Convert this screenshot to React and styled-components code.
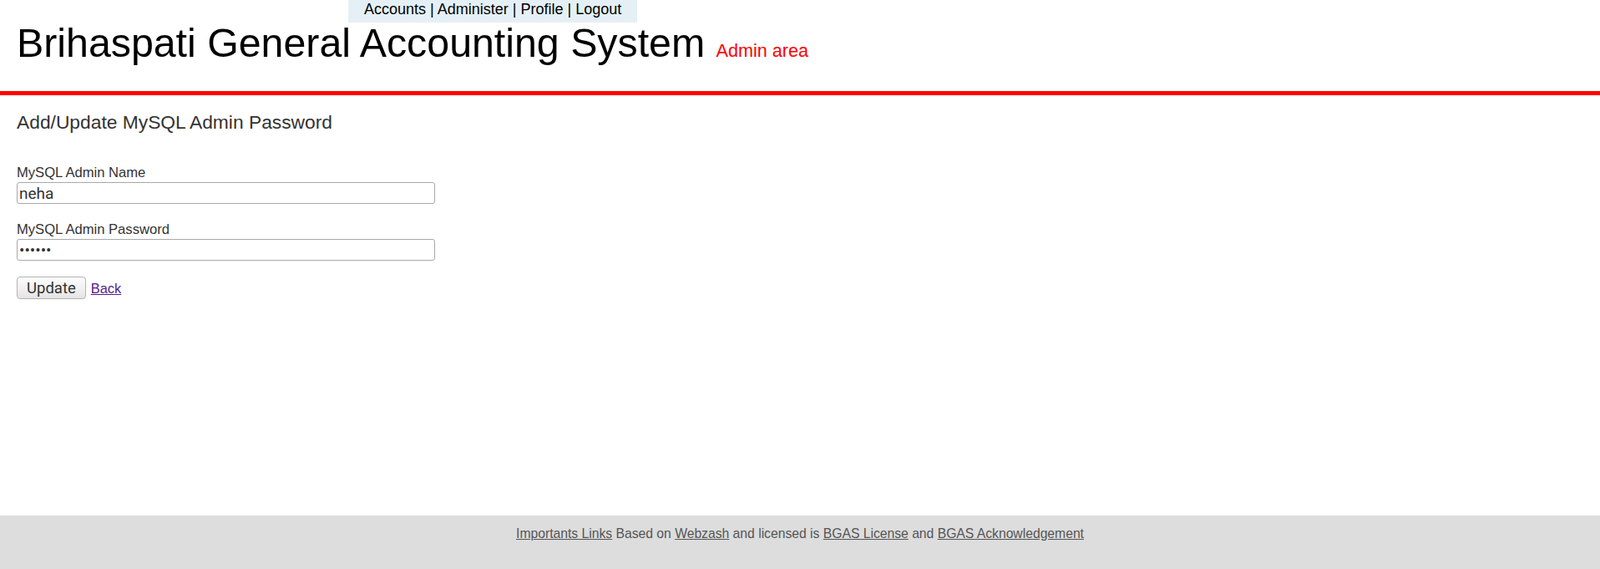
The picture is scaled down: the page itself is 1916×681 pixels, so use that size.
import React from "react";
import styled, { createGlobalStyle } from "styled-components";

const GlobalStyle = createGlobalStyle`
  html, body {
    margin: 0;
    padding: 0;
    background: #ffffff;
  }
  body {
    font-family: "Liberation Sans", Arial, sans-serif;
    color: #333333;
  }
`;

const Page = styled.div`
  min-height: 100vh;
  display: flex;
  flex-direction: column;
`;

const Header = styled.header`
  padding: 0 20px 24px;
  border-bottom: 5px solid #ff0000;
`;

const NavBar = styled.nav`
  display: inline-block;
  margin-left: 397px;
  padding: 1px 19px 6px;
  background: #e4f0f5;
  font-size: 18px;
  line-height: 20px;
  color: #000000;
`;

const NavLink = styled.a`
  color: #000000;
  text-decoration: none;
`;

const Title = styled.h1`
  margin: 0;
  font-size: 48.3px;
  line-height: 48px;
  font-weight: normal;
  color: #000000;
`;

const AreaTag = styled.span`
  font-size: 21.6px;
  color: #ff0000;
`;

const Main = styled.main`
  flex: 1;
  padding: 19px 20px 0;
`;

const Heading = styled.h2`
  margin: 0 0 37px;
  font-size: 22.8px;
  line-height: 27px;
  font-weight: normal;
  color: #333333;
`;

const Field = styled.div`
  margin-bottom: ${(p) => p.$gap}px;
`;

const Label = styled.label`
  display: block;
  font-size: 16.6px;
  line-height: 19px;
  margin-bottom: 2px;
  color: #333333;
`;

const Input = styled.input`
  display: block;
  box-sizing: border-box;
  width: 501px;
  height: 26px;
  margin: 0;
  padding: 0 2px;
  border: 1px solid #a8a8a8;
  border-radius: 3px;
  font-family: Roboto, "Open Sans", sans-serif;
  font-size: 19px;
  color: #333333;
  background: #ffffff;
  outline: none;
`;

const Actions = styled.div`
  display: flex;
  align-items: baseline;
  gap: 6px;
`;

const Button = styled.button`
  box-sizing: border-box;
  height: 27px;
  padding: 0 11px;
  border: 1px solid #b3b3b3;
  border-radius: 4px;
  background: linear-gradient(#fdfdfd, #e4e4e4);
  font-family: Roboto, "Open Sans", sans-serif;
  font-size: 18.5px;
  line-height: 24px;
  color: #333333;
  cursor: pointer;
`;

const BackLink = styled.a`
  font-size: 16.4px;
  color: #551a8b;
  text-decoration: underline;
`;

const Footer = styled.footer`
  height: 64px;
  box-sizing: border-box;
  padding-top: 13px;
  background: #dddddd;
  text-align: center;
  font-size: 15.7px;
  line-height: 18px;
  color: #555555;
`;

const FootLink = styled.a`
  color: #555555;
  text-decoration: underline;
`;

export default function App() {
  return (
    <Page>
      <GlobalStyle />
      <Header>
        <NavBar>
          <NavLink href="#">Accounts</NavLink> | <NavLink href="#">Administer</NavLink> |{" "}
          <NavLink href="#">Profile</NavLink> | <NavLink href="#">Logout</NavLink>
        </NavBar>
        <Title>
          Brihaspati General Accounting System <AreaTag>Admin area</AreaTag>
        </Title>
      </Header>
      <Main>
        <Heading>Add/Update MySQL Admin Password</Heading>
        <form onSubmit={(e) => e.preventDefault()}>
          <Field $gap={21}>
            <Label htmlFor="admin-name">MySQL Admin Name</Label>
            <Input id="admin-name" type="text" defaultValue="neha" />
          </Field>
          <Field $gap={19}>
            <Label htmlFor="admin-pass">MySQL Admin Password</Label>
            <Input id="admin-pass" type="password" defaultValue="123456" />
          </Field>
          <Actions>
            <Button type="submit">Update</Button>
            <BackLink href="#">Back</BackLink>
          </Actions>
        </form>
      </Main>
      <Footer>
        <FootLink href="#">Importants Links</FootLink> Based on <FootLink href="#">Webzash</FootLink> and
        licensed is <FootLink href="#">BGAS License</FootLink> and{" "}
        <FootLink href="#">BGAS Acknowledgement</FootLink>
      </Footer>
    </Page>
  );
}
